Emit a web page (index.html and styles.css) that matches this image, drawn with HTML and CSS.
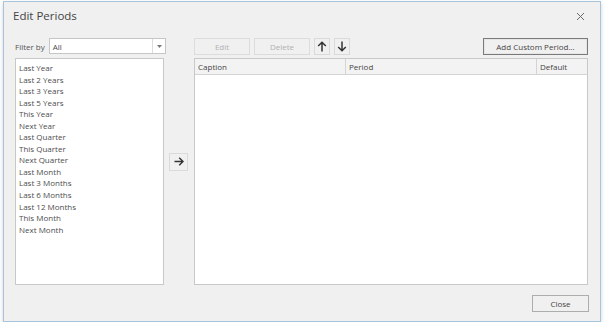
FILE: index.html
```html
<!DOCTYPE html>
<html lang="en">
<head>
    <meta charset="UTF-8">
    <title>Edit Periods</title>
    <link rel="stylesheet" href="styles.css">
</head>
<body>
    <div class="dialog">
        <div class="titlebar">
            <span class="title">Edit Periods</span>
            <svg class="close-x" width="9" height="9" viewBox="0 0 9 9">
                <path d="M1 1 L8 8 M8 1 L1 8" stroke="#6a6a6a" stroke-width="1"/>
            </svg>
        </div>

        <div class="main">
            <div class="filter-row">
                <span class="label">Filter by</span>
                <div class="combo">
                    <span class="combo-text">All</span>
                    <span class="combo-btn">
                        <svg width="5" height="3" viewBox="0 0 5 3"><path d="M0 0 H5 L2.5 3 Z" fill="#777"/></svg>
                    </span>
                </div>
            </div>
            <div class="spacer"></div>
            <div class="toolbar">
                <button class="btn disabled wide">Edit</button>
                <button class="btn disabled wider">Delete</button>
                <button class="btn icon">
                    <svg width="10" height="11" viewBox="0 0 10 11"><path d="M5 10.5 V1.5 M1.2 5 L5 1.2 L8.8 5" stroke="#333" stroke-width="1.5" fill="none"/></svg>
                </button>
                <button class="btn icon">
                    <svg width="10" height="11" viewBox="0 0 10 11"><path d="M5 0.5 V9.5 M1.2 6 L5 9.8 L8.8 6" stroke="#333" stroke-width="1.5" fill="none"/></svg>
                </button>
                <span class="grow"></span>
                <button class="btn default">Add Custom Period...</button>
            </div>

            <ul class="period-list">
                <li>Last Year</li>
                <li>Last 2 Years</li>
                <li>Last 3 Years</li>
                <li>Last 5 Years</li>
                <li>This Year</li>
                <li>Next Year</li>
                <li>Last Quarter</li>
                <li>This Quarter</li>
                <li>Next Quarter</li>
                <li>Last Month</li>
                <li>Last 3 Months</li>
                <li>Last 6 Months</li>
                <li>Last 12 Months</li>
                <li>This Month</li>
                <li>Next Month</li>
            </ul>
            <div class="move-col">
                <button class="btn move">
                    <svg width="10" height="9" viewBox="0 0 10 9"><path d="M0.5 4.5 H9 M5.2 0.8 L9 4.5 L5.2 8.2" stroke="#333" stroke-width="1.4" fill="none"/></svg>
                </button>
            </div>
            <div class="grid">
                <div class="grid-head">
                    <span class="col caption">Caption</span>
                    <span class="col period">Period</span>
                    <span class="col def">Default</span>
                </div>
                <div class="grid-body"></div>
            </div>
        </div>

        <div class="footer">
            <button class="btn close">Close</button>
        </div>
    </div>
</body>
</html>
```

FILE: styles.css
```css
body {
    margin: 0;
    background: #fff;
    font-family: "Open Sans", "Noto Sans", sans-serif;
    color: #4a4a4a;
}

.dialog {
    box-sizing: border-box;
    width: 598px;
    height: 321px;
    margin: 1px 0 0 3px;
    border: 1px solid #a7c4dd;
    background: #f0f0f0;
    box-shadow: 0 2px 4px rgba(0, 0, 0, 0.18);
    display: flex;
    flex-direction: column;
}

.titlebar {
    height: 36px;
    box-sizing: border-box;
    padding: 6px 15px 0 9px;
    display: flex;
    justify-content: space-between;
    align-items: flex-start;
}

.title {
    font-size: 11.5px;
    line-height: 16px;
    color: #444;
}

.close-x {
    margin-top: 4px;
}

.main {
    display: grid;
    grid-template-columns: 151px 28px 394px;
    grid-template-rows: 17px 227px;
    row-gap: 3px;
    padding: 0 0 0 11px;
}

.filter-row {
    display: flex;
    align-items: center;
    gap: 4px;
    height: 16px;
}

.label {
    font-size: 8px;
    color: #555;
}

.combo {
    flex: 1;
    height: 16px;
    box-sizing: border-box;
    border: 1px solid #c6c6c6;
    background: #fff;
    display: flex;
    align-items: center;
}

.combo-text {
    flex: 1;
    font-size: 8px;
    padding-left: 3px;
}

.combo-btn {
    width: 12px;
    height: 14px;
    border-left: 1px solid #dcdcdc;
    display: flex;
    align-items: center;
    justify-content: center;
}

.toolbar {
    display: flex;
    align-items: center;
    gap: 4px;
    height: 17px;
}

.grow {
    flex: 1;
}

.btn {
    height: 17px;
    box-sizing: border-box;
    border: 1px solid #adadad;
    background: #f0f0f0;
    font-family: inherit;
    font-size: 8px;
    color: #444;
    padding: 0;
    display: flex;
    align-items: center;
    justify-content: center;
}

.btn.disabled {
    color: #b0b0b0;
    border-color: #dcdcdc;
}

.btn.wide {
    width: 56px;
}

.btn.wider {
    width: 56px;
}

.btn.icon {
    width: 16px;
    border-color: #dadada;
}

.btn.default {
    width: 105px;
    border: 1px solid #7a7a7a;
    box-shadow: inset 0 0 0 1px #e6e6e6;
}

.period-list {
    margin: 0;
    padding: 3px 0 0 3px;
    list-style: none;
    width: 149px;
    box-sizing: border-box;
    border: 1px solid #c8c8c8;
    background: #fff;
}

.period-list li {
    font-size: 8px;
    line-height: 11.55px;
    color: #4d4d4d;
}

.move-col {
    display: flex;
    align-items: center;
    padding-left: 3px;
    padding-bottom: 20px;
}

.btn.move {
    width: 19px;
    height: 18px;
    border-color: #dadada;
}

.grid {
    box-sizing: border-box;
    border: 1px solid #c8c8c8;
    background: #fff;
    display: flex;
    flex-direction: column;
}

.grid-head {
    display: flex;
    height: 15px;
    background: #f3f3f3;
    border-bottom: 1px solid #d4d4d4;
}

.col {
    font-size: 8px;
    line-height: 15px;
    padding-left: 3px;
    box-sizing: border-box;
    color: #444;
}

.caption {
    width: 151px;
    border-right: 1px solid #d4d4d4;
}

.period {
    width: 191px;
    border-right: 1px solid #d4d4d4;
}

.def {
    flex: 1;
}

.grid-body {
    flex: 1;
}

.footer {
    display: flex;
    justify-content: flex-end;
    padding: 10px 11px 0 0;
}

.btn.close {
    width: 57px;
}
```
